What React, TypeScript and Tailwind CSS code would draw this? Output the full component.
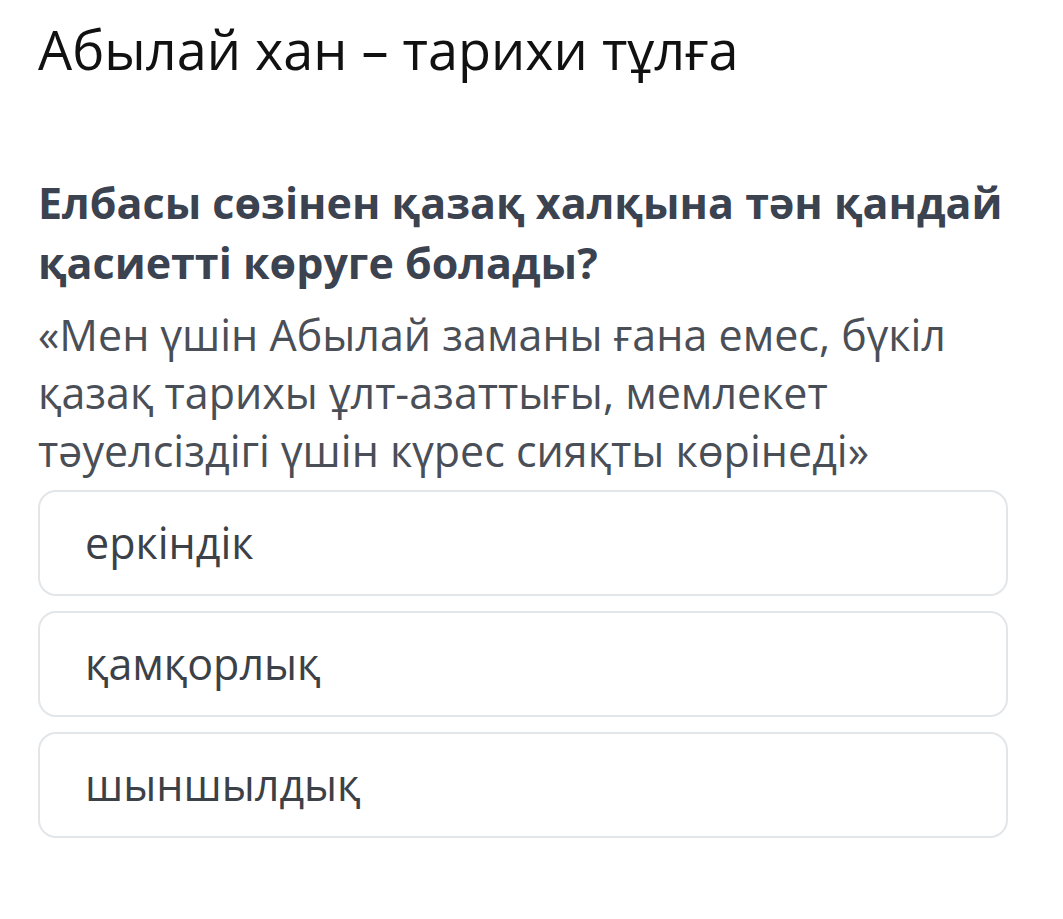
export default function App() {
    const options = ["еркіндік", "қамқорлық", "шыншылдық"];
    return (
        <div
            className="min-h-[919px] w-[1063px] bg-white px-[38px] pt-[13px]"
            style={{ fontFamily: '"Open Sans", "Noto Sans", sans-serif' }}
        >
            <h1 className="text-[54px] leading-[72px] font-normal text-[#111111]">
                Абылай хан – тарихи тұлға
            </h1>
            <h2 className="mt-[88px] text-[43px] leading-[60px] font-bold text-[#3b4250]">
                Елбасы сөзінен қазақ халқына тән қандай қасиетті көруге болады?
            </h2>
            <p className="mt-[13px] text-[43px] leading-[58px] text-[#4a4f57]">
                «Мен үшін Абылай заманы ғана емес, бүкіл қазақ тарихы ұлт-азаттығы,
                мемлекет тәуелсіздігі үшін күрес сияқты көрінеді»
            </p>
            <div className="mt-[10px] flex w-[970px] flex-col gap-[15px]">
                {options.map((o) => (
                    <div
                        key={o}
                        className="flex h-[106px] items-center rounded-[18px] border-2 border-[#e3e6e9] px-[45px] text-[43px] text-[#3c4148]"
                    >
                        {o}
                    </div>
                ))}
            </div>
        </div>
    );
}
